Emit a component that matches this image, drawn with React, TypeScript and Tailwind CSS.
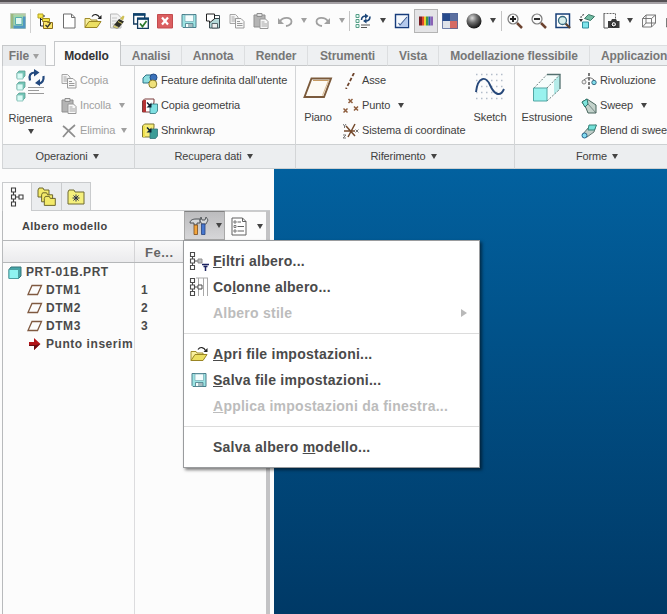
import type { ReactNode } from 'react'
import clsx from 'clsx'

type IconProps = { children: ReactNode; w?: number; h?: number }

function Svg({ children, w = 16, h = 16 }: IconProps) {
  return (
    <svg width={w} height={h} viewBox={`0 0 ${w} ${h}`} fill="none" className="block shrink-0">
      {children}
    </svg>
  )
}

function Arrow({ light }: { light?: boolean }) {
  return (
    <svg width="6" height="5" viewBox="0 0 6 5" className="block shrink-0">
      <path d="M0 0h6L3 5z" fill={light ? '#a0a0a0' : '#444'} />
    </svg>
  )
}

const WindowIcon = () => (
  <Svg>
    <path d="M.5.5h15v15H.5z" fill="#b5cba6" stroke="#c0d0bb" />
    <path d="M1 1h2.500v14H1z" fill="#9bb87e" />
    <path d="M3.500 3.500h12v12h-12z" fill="#4f97c2" />
    <path d="M3.500 2h9.500v10.500H3.500z" fill="#a3d6a8" />
    <path d="M5.500 4.500h6.500v7H5.500z" fill="#e2f8ee" stroke="#58adb0" />
  </Svg>
)

const TreeCheckIcon = () => (
  <Svg>
    <path d="M1 1h5v4H1z" fill="#f5e64a" stroke="#b5a21e" />
    <path d="M3.500 5v8H6M3.500 6.500H9M6 3h2" stroke="#1f2433" />
    <path d="M5.500 5.500h7v3h-7z" fill="#f5e64a" stroke="#a3901a" />
    <path d="M6.500 9.500v-1h4v1h5v6h-9z" fill="#fbe66c" stroke="#8a6d1d" />
    <path d="M8.500 12l2 2 3-4" stroke="#333" strokeWidth="1.300" />
  </Svg>
)

const PageIcon = () => (
  <Svg>
    <path d="M2.500 1h8l3.500 3.500v10.500H2.500z" fill="#fff" stroke="#6d6d6d" />
    <path d="M10.500 1v3.500H14" stroke="#6d6d6d" />
  </Svg>
)

const OpenIcon = () => (
  <Svg w={18}>
    <path d="M1 14.500V5.500h5l1 1.500h6v2" fill="#f8f0a0" stroke="#a08c2c" />
    <path d="M1 14.500l4-6h12l-4 6z" fill="#ecdf62" stroke="#9a8524" />
    <path d="M8 3.500c2-3 6-2.500 7.500 1" stroke="#222" strokeWidth="1.200" />
    <path d="M17.500 2v4h-4z" fill="#222" />
  </Svg>
)

const EraseIcon = () => (
  <Svg>
    <path d="M1.500 1h7L12 4.500V15H1.500z" fill="#f2f2f2" stroke="#b8b8b8" />
    <path d="M3 5h5M3 8h5M3 11h3" stroke="#c6c6c6" />
    <path d="M5 12l5-6 5 2.500-5 6z" fill="#2f2f25" />
    <path d="M5 12l5 2.500-2 1-4-1.500z" fill="#e5d86a" stroke="#777" strokeWidth=".6" />
    <path d="M11 5.500l3-3 1.500 1-1.500 4z" fill="#cdbf55" />
    <path d="M9 8.500l4 2" stroke="#d8ca68" />
  </Svg>
)

const WindowsCheckIcon = () => (
  <Svg>
    <path d="M.7 1h11v10H.7z" fill="#fff" stroke="#123a5c" strokeWidth="1.300" />
    <path d="M0 .3h12.500v2.500H0z" fill="#0d416c" />
    <path d="M4.600 5.500h10.700v9.800H4.600z" fill="#fff" stroke="#123a5c" strokeWidth="1.300" />
    <path d="M4 4.500h12v2.300H4z" fill="#0d416c" />
    <path d="M7 10.500l2.500 3 4-5.500" stroke="#2c7a2c" strokeWidth="1.700" />
  </Svg>
)

const CloseIcon = () => (
  <Svg>
    <path d="M.5 1.500h15v13.500H.5z" fill="#db5e60" stroke="#c34b4e" />
    <path d="M5 4.500l6 7M11 4.500l-6 7" stroke="#fff" strokeWidth="2.200" />
  </Svg>
)

const DiskIcon = () => (
  <Svg>
    <path d="M1 1.500h14v13H2L1 13.500z" fill="#9ce4e3" stroke="#4c7f8c" />
    <path d="M4 2h8.500v6.500H4z" fill="#f4fdfd" stroke="#78a9b3" strokeWidth=".7" />
    <path d="M4.500 10.500H12v4H4.500z" fill="#a5bcc0" stroke="#4c7f8c" strokeWidth=".8" />
    <path d="M5 11h2v3H5z" fill="#f4fdfd" />
  </Svg>
)

const SaveCopyIcon = () => (
  <Svg>
    <path d="M4.500 5.500h10v9.500h-10z" fill="#b4d8d8" stroke="#3a4a50" />
    <path d="M7 10.500h5.500V15H7z" fill="#eee" stroke="#3a4a50" strokeWidth=".8" />
    <path d="M1.500 1h8v5l-3 2-2 2V8h-3z" fill="#fff" stroke="#222" />
    <path d="M10 2.500h4.500V15" stroke="#3a4a50" />
  </Svg>
)

const CopyIcon = () => (
  <Svg>
    <path d="M1 1.500h5.500l2.500 2.500v6.500H1z" fill="#f4f4f4" stroke="#a6a6a6" />
    <path d="M2.500 4h3M2.500 6h5M2.500 8h5" stroke="#a6a6a6" />
    <path d="M6.500 5.500H12l3 3V15H6.500z" fill="#f8f8f8" stroke="#9b9b9b" />
    <path d="M8 8.500h3M8 10.500h5.500M8 12.500h5.500" stroke="#9b9b9b" />
  </Svg>
)

const PasteIcon = () => (
  <Svg>
    <path d="M1 2h11v12H1z" fill="#b4b4b4" stroke="#8f8f8f" />
    <path d="M4 .5h5v3H4z" fill="#e2e2e2" stroke="#8f8f8f" />
    <path d="M7 6h5.500L15 8.500v7H7z" fill="#f8f8f8" stroke="#989898" />
    <path d="M8.500 9h3M8.500 11H14M8.500 13H14" stroke="#a5a5a5" />
  </Svg>
)

const UndoIcon = ({ flip }: { flip?: boolean }) => (
  <svg width="16" height="16" viewBox="0 0 16 16" fill="none" className={clsx('block', flip && '-scale-x-100')}>
    <path d="M3 8.500C5.500 4 14.500 3.500 14.500 8.500c0 2.500-2 4-5.500 4.500" stroke="#a0a0a0" strokeWidth="1.800" />
    <path d="M1 5v6h6z" fill="#a0a0a0" />
  </svg>
)

const RegenListIcon = () => (
  <Svg>
    <path d="M1 1.500h3v3H1zM1 6.500h3v3H1zM1 11.500h3v3H1z" fill="#e6fbf4" stroke="#579f88" />
    <path d="M6 12h9M6 14.500h6" stroke="#555" />
    <path d="M6.500 7c0-3 2-4 4.500-4M15 3.500c0 3-2 4.500-4.500 4.500" stroke="#1c4679" strokeWidth="1.600" />
    <path d="M10 .5L13.500 3 10 6zM11.500 5.500v5L8 8z" fill="#1c4679" />
  </Svg>
)

const RepaintIcon = () => (
  <Svg>
    <path d="M1.500 1.500h13v13h-13z" fill="#f4f8fd" stroke="#173c7c" strokeWidth="1.400" />
    <path d="M14 4v10H4z" fill="#b4c9ec" />
    <path d="M4.500 10l1.500 2 7-8" stroke="#3e5d93" strokeWidth="1.100" />
  </Svg>
)

const ColorsIcon = () => (
  <Svg>
    <path d="M1 3.500h3v9H1z" fill="#7a1d22" />
    <path d="M4 3.500h2v9H4z" fill="#e04a2b" />
    <path d="M6 3.500h2v9H6z" fill="#efcf31" />
    <path d="M8 3.500h2.500v9H8z" fill="#3d9a47" />
    <path d="M10.500 3.500h2v9h-2z" fill="#2a56b4" />
    <path d="M12.500 3.500h2.500v9h-2.500z" fill="#8a62b5" />
  </Svg>
)

const SquaresIcon = () => (
  <Svg>
    <path d="M0 0h8v8H0z" fill="#264a8c" />
    <path d="M8 0h8v8H8z" fill="#5b6f9f" />
    <path d="M0 8h8v8H0z" fill="#dfe3ea" />
    <path d="M8 8h8v8H8z" fill="#d66a64" />
    <path d="M.5.500h15v15H.5z" stroke="#52679a" strokeWidth=".8" />
  </Svg>
)

const SphereIcon = () => (
  <Svg>
    <defs>
      <radialGradient id="ball" cx=".38" cy=".3" r=".7">
        <stop offset="0" stopColor="#dadada" />
        <stop offset=".45" stopColor="#707070" />
        <stop offset="1" stopColor="#161616" />
      </radialGradient>
    </defs>
    <circle cx="8" cy="8" r="7.500" fill="url(#ball)" />
  </Svg>
)

const ZoomIcon = ({ plus }: { plus?: boolean }) => (
  <Svg>
    <path d="M10 10l5 5" stroke="#6c4330" strokeWidth="2.500" />
    <circle cx="6" cy="6" r="5" fill="#fafafa" stroke="#7b7b7b" strokeWidth="1.200" />
    <path d={plus ? 'M3 6h6M6 3v6' : 'M3 6h6'} stroke="#222" strokeWidth="1.900" />
  </Svg>
)

const RefitIcon = () => (
  <Svg>
    <path d="M1 1h13.500v13.500H1z" fill="#fff" stroke="#173f78" strokeWidth="1.500" />
    <path d="M10.500 10.500L15 15" stroke="#5b4432" strokeWidth="2.300" />
    <circle cx="7.500" cy="7.500" r="4" fill="#d9efec" stroke="#386a80" strokeWidth="1.300" />
  </Svg>
)

const ReorientIcon = () => (
  <Svg>
    <path d="M3.500 9h6v6h-6z" fill="#80e5ec" stroke="#2f8e9c" />
    <path d="M5.500 5.500l4-4 6 2-4 4z" fill="#72bda3" stroke="#3c7767" />
    <path d="M2 8V4.500c0-2 2-3 4-3" stroke="#333" strokeDasharray="2 1" />
    <path d="M0 6h4L2 9z" fill="#333" />
  </Svg>
)

const CameraIcon = () => (
  <Svg w={17}>
    <path d="M.5.500h12v5" stroke="#666" strokeDasharray="2 1" />
    <path d="M1 1v14h4" stroke="#555" />
    <path d="M5 8h3l1-2h4l1 2h2.500v7H5z" fill="#3d3d3d" />
    <circle cx="10.800" cy="11.300" r="2.700" fill="#eee" stroke="#111" />
    <circle cx="10.800" cy="11.300" r="1" fill="#444" />
  </Svg>
)

const CubeIcon = () => (
  <Svg>
    <path d="M1.500 5.500h9v8.500h-9zM5 2h9.500v8H5zM1.500 5.500L5 2M10.500 5.500l4-3.500M10.500 14l4-4M1.500 14L5 10" stroke="#6c6c6c" strokeWidth=".9" />
  </Svg>
)

function Cell({ children, on }: { children: ReactNode; on?: boolean }) {
  return (
    <div
      className={clsx(
        'flex h-6 w-6 shrink-0 items-center justify-center',
        on && 'border border-[#b4b4b4] bg-[#e4e4e6]'
      )}
    >
      {children}
    </div>
  )
}

function Drop({ light, wide }: { light?: boolean; wide?: boolean }) {
  return (
    <div className={clsx('flex shrink-0 justify-center', wide ? 'w-[15px]' : 'w-[14px]')}>
      <Arrow light={light} />
    </div>
  )
}

function QuickBar() {
  return (
    <div className="flex h-[33px] items-center pl-[6px]">
      <Cell><WindowIcon /></Cell>
      <div className="mr-[2px] h-6 w-px shrink-0 bg-[#d0d0d0]" />
      <Cell><TreeCheckIcon /></Cell>
      <Cell><PageIcon /></Cell>
      <Cell><OpenIcon /></Cell>
      <Cell><EraseIcon /></Cell>
      <Cell><WindowsCheckIcon /></Cell>
      <Cell><CloseIcon /></Cell>
      <Cell><DiskIcon /></Cell>
      <Cell><SaveCopyIcon /></Cell>
      <Cell><CopyIcon /></Cell>
      <Cell><PasteIcon /></Cell>
      <Cell><UndoIcon /></Cell>
      <Drop light />
      <Cell><UndoIcon flip /></Cell>
      <Drop light />
      <div className="mr-px h-5 w-px shrink-0 bg-[#c4c4c4]" />
      <Cell><RegenListIcon /></Cell>
      <Drop wide />
      <Cell><RepaintIcon /></Cell>
      <Cell on><ColorsIcon /></Cell>
      <Cell><SquaresIcon /></Cell>
      <Cell><SphereIcon /></Cell>
      <Drop />
      <div className="mx-px h-5 w-px shrink-0 bg-[#c4c4c4]" />
      <Cell><ZoomIcon plus /></Cell>
      <Cell><ZoomIcon /></Cell>
      <Cell><RefitIcon /></Cell>
      <Cell><ReorientIcon /></Cell>
      <Cell><CameraIcon /></Cell>
      <Drop />
      <Cell><CubeIcon /></Cell>
      <Cell><CubeIcon /></Cell>
    </div>
  )
}

const tabs = [
  { name: 'Analisi', width: 'w-[61px]' },
  { name: 'Annota', width: 'w-[63px]' },
  { name: 'Render', width: 'w-[63px]' },
  { name: 'Strumenti', width: 'w-[80px]' },
  { name: 'Vista', width: 'w-[51px]' },
  { name: 'Modellazione flessibile', width: 'w-[151px]' },
]

function TabBar() {
  return (
    <div className="flex h-[29px] items-end pl-[2px] text-[12px] font-bold tracking-[-0.1px] text-[#777]">
      <div className="flex h-[21px] w-[44px] shrink-0 items-center justify-center gap-1 border border-b-0 border-[#c6c8ca] bg-[#e9ebed]">
        File <Arrow light />
      </div>
      <div className="h-px w-[8px] shrink-0 bg-[#c6c8ca]" />
      <div className="flex h-[25px] w-[67px] shrink-0 items-center justify-center border border-b-0 border-[#c6c8ca] bg-[#fcfcfc] pt-[3px] pr-[2px] text-[#333]">
        Modello
      </div>
      {tabs.map((tab) => (
        <div
          key={tab.name}
          className={clsx(
            'flex h-[21px] shrink-0 items-center justify-center border-y border-r border-[#dcdee0] border-b-[#c6c8ca] bg-[#eef0f2] whitespace-nowrap',
            tab.width
          )}
        >
          {tab.name}
        </div>
      ))}
      <div className="flex h-[21px] flex-1 items-center border-y border-[#dcdee0] border-b-[#c6c8ca] bg-[#eef0f2] pl-[11px]">
        Applicazion
      </div>
    </div>
  )
}

const RegenerateIcon = () => (
  <Svg w={32} h={34}>
    {[4, 15, 26].map((y) => (
      <g key={y}>
        <path d={`M2 ${y}l2-2h6v5l-2 2H2z`} fill="#6fc8b8" stroke="#5d9a90" strokeWidth=".8" />
        <path d={`M2 ${y}h6v6H2z`} fill="#d9fbf5" stroke="#7fbdb2" strokeWidth=".8" />
      </g>
    ))}
    <path d="M13 18.500h16M13 21.500h11M13 24.500h16" stroke="#9a9a9a" />
    <path d="M15 11.500c-1.500-5 .5-8 4.500-8M28.500 7c.5 4-1.500 7-5 8" stroke="#23497e" strokeWidth="2.200" />
    <path d="M19 0l5.500 3.500L19 7.500zM25 10v7l-5-3z" fill="#23497e" />
  </Svg>
)

const DeleteIcon = () => (
  <Svg>
    <path d="M2 3c4 3 8 7 12 11M14 2C9 6 5 10 2 14" stroke="#8e8e8e" strokeWidth="1.700" />
  </Svg>
)

const UdfIcon = () => (
  <Svg>
    <path d="M1 5l3-3h6l-1 5-3 3H1z" fill="#8edee0" stroke="#2c7386" />
    <circle cx="11.500" cy="4.500" r="3.500" fill="#3a72bb" stroke="#234c85" />
    <path d="M8 8h6v6H8z" fill="#f3df67" />
    <circle cx="10.800" cy="11" r="4" fill="#efe17a" stroke="#8b7d2f" />
  </Svg>
)

const CopyGeomIcon = ({ wrap }: { wrap?: boolean }) => (
  <Svg>
    <path d="M.5 3l2-2H12v3l-2 10H.5z" fill={wrap ? '#f6ec76' : '#fff'} stroke={wrap ? '#7d7630' : '#7b3a3a'} />
    <path d={wrap ? 'M1 3h2v11H1z' : 'M1 2h3v12H1z'} fill={wrap ? '#efe04c' : '#b53335'} />
    <path d="M8 8l2-2h5.500v7l-2 2.500H8z" fill={wrap ? '#3b9c97' : '#7fe0e2'} stroke="#2f7278" strokeWidth=".8" />
    <path d="M5 4.500l3 3" stroke="#0c2233" strokeWidth="1.500" />
    <path d="M9.500 4.500v5H4.500z" fill="#0c2233" />
  </Svg>
)

const PlaneIcon = () => (
  <Svg w={32} h={24}>
    <path d="M9.500 2.500h19.500L22 21H2.500z" fill="#fdfaf4" stroke="#7b5a3b" strokeWidth="1.900" />
    <path d="M11 4.500h15.500" stroke="#c79b62" />
    <path d="M26.500 4.500L20.500 19.500" stroke="#c79b62" strokeWidth=".7" />
  </Svg>
)

const AxisIcon = () => (
  <Svg>
    <path d="M11 0L3 16" stroke="#6d432b" strokeWidth="1.800" strokeDasharray="3.500 2" />
  </Svg>
)

const PointIcon = () => (
  <Svg>
    <path d="M5.500 1l4 4M9.500 1l-4 4M.5 10.500l4 4M4.500 10.500l-4 4M11 8.500l4 4M15 8.500l-4 4" stroke="#8d5c3c" strokeWidth="1.500" />
  </Svg>
)

const CsysIcon = () => (
  <Svg>
    <path d="M1 8h11M3 3l9 10M12 1L5 14" stroke="#74492c" strokeWidth="1.500" />
    <path d="M0 1l1.500 2L3 1M1.500 3v2M0 12h3l-3 3h3M12.500 6.500l3 3M15.500 6.500l-3 3" stroke="#777" />
  </Svg>
)

const SketchIcon = () => (
  <Svg w={30} h={29}>
    {[1, 7, 13, 19, 25].map((y) => (
      <path key={y} d={`M1 ${y + 0.5}h28`} stroke="#b3bdca" strokeWidth="1.500" strokeDasharray="1.500 3.500" />
    ))}
    <path d="M1 19C3 3 11 3 15 12s10 13 14 4" stroke="#264779" strokeWidth="1.900" />
  </Svg>
)

const ExtrudeIcon = () => (
  <Svg w={30} h={30}>
    <path d="M2 15L15 1.500h13V16L15 28" fill="#f6fdfc" />
    <path d="M22 7.500L28 1.500V16l-6 6z" fill="#b5ece9" />
    <path d="M2 15L15 1.500M15 15L28 1.500M15 28l13-12" stroke="#6d8080" strokeDasharray="2 1.500" />
    <path d="M15 1.500h13V16" stroke="#54706f" strokeWidth="1.300" />
    <path d="M1.500 15h13.500v13H1.500z" fill="#98f2ee" stroke="#52a6a4" />
  </Svg>
)

const RevolveIcon = () => (
  <Svg>
    <path d="M8 0v16" stroke="#222" strokeWidth="1.200" strokeDasharray="3 1.500" />
    <circle cx="3" cy="9" r="2" fill="#eee" stroke="#888" />
    <circle cx="13" cy="9.500" r="2.200" fill="#7fdcea" stroke="#3b6d86" />
    <path d="M3 7c3-3 7-3 10 0" stroke="#666" />
  </Svg>
)

const SweepIcon = () => (
  <Svg>
    <path d="M1 4l5-3 9 6v8H7L5 10z" fill="#c3d2cb" stroke="#46645c" />
    <path d="M1 4l5-3 1 5-3 3z" fill="#7fe4dc" stroke="#2f7a70" />
    <path d="M7 6l8 9" stroke="#566" strokeWidth=".7" />
  </Svg>
)

const BlendIcon = () => (
  <Svg>
    <path d="M1 12L8 4l7-2-2 7-7 5z" fill="#bdccc8" stroke="#627773" />
    <path d="M8 2h7.500l-2 5H7z" fill="#74e0d8" stroke="#368379" />
    <circle cx="3.500" cy="12.500" r="2.500" fill="#84dcf0" stroke="#26658e" />
  </Svg>
)

type RowProps = { icon: ReactNode; label: string; off?: boolean; drop?: string }

function Row({ icon, label, off, drop }: RowProps) {
  return (
    <div className={clsx('flex h-[25px] items-center gap-[3px] whitespace-nowrap', off && 'text-[#a0a0a0]')}>
      {icon}
      <span>{label}</span>
      {drop && <div className={drop}><Arrow light={off} /></div>}
    </div>
  )
}

function Group({ title, width, children }: { title: string; width: string; children: ReactNode }) {
  return (
    <div className={clsx('flex h-[103px] shrink-0 flex-col border-r border-[#d3d5d7]', width)}>
      <div className="flex h-[78px] pt-[2px]">{children}</div>
      <div className="flex h-[25px] items-center justify-center gap-[5px] border-y border-[#cdd0d2] bg-[#eceef0] pr-[3px]">
        {title} <Arrow />
      </div>
    </div>
  )
}

function Ribbon() {
  return (
    <div className="flex pl-[2px] text-[11px] tracking-[-0.11px] text-[#3f3f3f]">
      <div className="flex border-l border-[#d3d5d7]">
        <Group title="Operazioni" width="w-[132px]">
          <div className="flex w-[55px] shrink-0 flex-col items-center pt-[1px]">
            <RegenerateIcon />
            <span className="mt-[7px]">Rigenera</span>
            <div className="mt-[2px]"><Arrow /></div>
          </div>
          <div className="pl-[3px]">
            <Row icon={<CopyIcon />} label="Copia" off />
            <Row icon={<PasteIcon />} label="Incolla" off drop="ml-[5px]" />
            <Row icon={<DeleteIcon />} label="Elimina" off drop="ml-[3px]" />
          </div>
        </Group>
        <Group title="Recupera dati" width="w-[161px]">
          <div className="pl-[7px]">
            <Row icon={<UdfIcon />} label="Feature definita dall'utente" />
            <Row icon={<CopyGeomIcon />} label="Copia geometria" />
            <Row icon={<CopyGeomIcon wrap />} label="Shrinkwrap" />
          </div>
        </Group>
        <Group title="Riferimento" width="w-[219px]">
          <div className="flex w-[44px] shrink-0 flex-col items-center pt-[8px]">
            <PlaneIcon />
            <span className="mt-[9px]">Piano</span>
          </div>
          <div className="w-[128px] shrink-0 pl-[3px]">
            <Row icon={<AxisIcon />} label="Asse" />
            <Row icon={<PointIcon />} label="Punto" drop="ml-[5px]" />
            <Row icon={<CsysIcon />} label="Sistema di coordinate" />
          </div>
          <div className="flex w-[44px] shrink-0 flex-col items-center pt-[5px]">
            <SketchIcon />
            <span className="mt-[7px]">Sketch</span>
          </div>
        </Group>
        <Group title="Forme" width="w-[168px]">
          <div className="flex w-[64px] shrink-0 flex-col items-center pt-[5px]">
            <ExtrudeIcon />
            <span className="mt-[6px]">Estrusione</span>
          </div>
          <div className="pl-[2px]">
            <Row icon={<RevolveIcon />} label="Rivoluzione" />
            <Row icon={<SweepIcon />} label="Sweep" drop="ml-[5px]" />
            <Row icon={<BlendIcon />} label="Blend di swee" />
          </div>
        </Group>
      </div>
    </div>
  )
}

const NodesIcon = () => (
  <Svg w={14} h={20}>
    <path d="M1.500 1h4v4h-4zM1.500 8h4v4h-4zM1.500 15h4v4h-4zM9 8h4v4H9zM3.500 5v3M3.500 12v3M5.500 10H9" stroke="#3c3c3c" strokeWidth="1.100" />
  </Svg>
)

const FoldersIcon = () => (
  <Svg w={20} h={20}>
    {[0, 4, 7].map((d) => (
      <path
        key={d}
        d={`M${1 + d * 0.9} ${10 + d * 1.2}v-7l1-2h4l1 2h5v7z`}
        fill="#f3ea6a"
        stroke="#5f5a22"
        strokeWidth=".9"
      />
    ))}
  </Svg>
)

const FavoritesIcon = () => (
  <Svg w={18} h={16}>
    <path d="M1 15V3l1-2h5l1 2h9v12z" fill="#f5f07c" stroke="#6f6a32" />
    <path d="M9 5.500v7M5.500 9h7M6.500 6.500l5 5M11.500 6.500l-5 5" stroke="#2b2f4a" strokeWidth="1" />
  </Svg>
)

const ToolsIcon = () => (
  <Svg w={20} h={20}>
    <path d="M1 7c0-3 3-4 6-4h4v4H8v2H5V7z" fill="#d5d8da" stroke="#4c5054" />
    <path d="M5 9h3.500v9.500H5z" fill="#f2a53c" stroke="#7c4c1c" strokeWidth=".8" />
    <path d="M12 1l1 3h3l1-3 2 3-2 4h-4l-2-3z" fill="#d5d8da" stroke="#4c5054" strokeWidth=".9" />
    <path d="M12.500 8h3.500v10.500h-3.500z" fill="#4878cf" stroke="#26437d" strokeWidth=".8" />
  </Svg>
)

const ListIcon = () => (
  <Svg w={16} h={19}>
    <path d="M1 1h10.500L15 4.500V18H1z" fill="#fff" stroke="#606060" />
    <path d="M11.500 1v3.500H15M6.500 5H10M6.500 9.500h6.500M6.500 14h6.500" stroke="#606060" />
    <path d="M3 4h2v2H3zM3 8.500h2v2H3zM3 13h2v2H3z" stroke="#606060" strokeWidth=".8" />
  </Svg>
)

const PartIcon = () => (
  <Svg w={14} h={13}>
    <path d="M1 3.500l2-2.500h10v9l-2.500 2.500H1z" fill="#46a5a8" stroke="#35777b" />
    <path d="M1 3.500h9.500v9H1z" fill="#8ff3f1" stroke="#4ca0a2" />
  </Svg>
)

const DatumIcon = () => (
  <Svg w={16} h={12}>
    <path d="M5 1.500h9.500l-4 9H1z" stroke="#7f5940" strokeWidth="1.300" />
  </Svg>
)

const InsertIcon = () => (
  <Svg w={12} h={12}>
    <path d="M0 4h5V0l6.500 6L5 12V8H0z" fill="#b31318" />
    <path d="M5 12V8H0V7h7l4-1z" fill="#6c0c10" />
  </Svg>
)

function TreeRow({ icon, name, id }: { icon: ReactNode; name: string; id?: string }) {
  return (
    <div className="flex h-[18px] items-center">
      <div className="flex h-full w-[131px] items-center gap-[4px] pl-[24px] whitespace-nowrap">
        <div className="flex w-[15px] shrink-0 justify-center">{icon}</div>
        {name}
      </div>
      <div className="pl-[7px]">{id}</div>
    </div>
  )
}

function TreePanel() {
  return (
    <div className="flex w-[274px] shrink-0 flex-col pt-[13px] pl-[2px]">
      <div className="flex h-[29px] items-end">
        <div className="flex h-[29px] w-[30px] items-center justify-center border border-b-0 border-[#c9cbcd] bg-[#fcfcfc]">
          <NodesIcon />
        </div>
        <div className="flex h-[29px] w-[30px] items-center justify-center border border-l-0 border-[#c9cbcd] bg-[#ebedef]">
          <FoldersIcon />
        </div>
        <div className="flex h-[29px] w-[29px] items-center justify-center border border-l-0 border-[#c9cbcd] bg-[#ebedef]">
          <FavoritesIcon />
        </div>
        <div className="h-px flex-1 bg-[#c9cbcd]" />
        <div className="w-[4px]" />
      </div>
      <div className="flex flex-1 border-l border-[#b8babc]">
        <div className="flex flex-1 flex-col">
          <div className="flex h-[29px] items-stretch">
            <div className="flex flex-1 items-center pt-[2px] pl-[19px] text-[11px] font-bold tracking-[0.4px] text-[#444]">
              Albero modello
            </div>
            <div className="flex w-[41px] items-center gap-[7px] border border-[#a8a8a8] border-t-[#808080] bg-linear-to-b from-[#bcbcbe] to-[#d6d6d8] pl-[4px]">
              <ToolsIcon />
              <Arrow />
            </div>
            <div className="flex w-[41px] items-center gap-[10px] border-t border-[#ccc] pl-[6px]">
              <ListIcon />
              <Arrow />
            </div>
          </div>
          <div className="flex h-[23px] border-y border-[#b5b7b9] bg-linear-to-b from-[#fafafa] to-[#ebebed] text-[13px] font-bold tracking-[0.5px] text-[#666]">
            <div className="w-[132px] border-r border-[#d4d4d6]" />
            <div className="pt-[3px] pl-[10px] leading-[18px]">Fe...</div>
          </div>
          <div className="flex-1 bg-[linear-gradient(to_right,transparent_131px,#dcdcde_131px,#dcdcde_132px,transparent_132px)] text-[12px] font-bold tracking-[0.55px] text-[#4a4a4a]">
            <div className="flex h-[18px] items-center gap-[4px] pl-[5px]">
              <PartIcon />
              PRT-01B.PRT
            </div>
            <TreeRow icon={<DatumIcon />} name="DTM1" id="1" />
            <TreeRow icon={<DatumIcon />} name="DTM2" id="2" />
            <TreeRow icon={<DatumIcon />} name="DTM3" id="3" />
            <TreeRow icon={<InsertIcon />} name="Punto inserim" />
          </div>
        </div>
        <div className="mr-[4px] w-[4px] bg-[#c3c3c5]" />
      </div>
    </div>
  )
}

const FilterIcon = ({ columns }: { columns?: boolean }) => (
  <Svg w={20} h={20}>
    {columns && <path d="M7 1h12M9.500 1v18M14.500 1v18M18.500 1v18" stroke="#a9a9a9" />}
    <path d="M1.500 1.500h4v4h-4zM1.500 8h4v4h-4zM1.500 14.500h4v4h-4zM3.500 5.500V8M3.500 12v2.500M5.500 10H9" stroke="#4b4b4b" strokeWidth="1.100" />
    <path d="M9 8h4v4H9z" fill={columns ? '#fff' : '#c0c0c0'} stroke={columns ? '#4b4b4b' : '#909090'} />
    {!columns && <path d="M13 13.500h7M14.500 15.500h4M16.500 16v4" stroke="#1c2360" strokeWidth="1.500" />}
  </Svg>
)

type ItemProps = { icon?: ReactNode; off?: boolean; sub?: boolean; children: ReactNode }

function Item({ icon, off, sub, children }: ItemProps) {
  return (
    <div className={clsx('flex h-[26px] items-center pr-[12px] whitespace-nowrap', off && 'text-[#bcbcbc]')}>
      <div className="flex w-[29px] shrink-0 justify-center">{icon}</div>
      <span className="flex-1">{children}</span>
      {sub && (
        <svg width="6" height="8" viewBox="0 0 6 8">
          <path d="M0 0l6 4-6 4z" fill="#b9b9b9" />
        </svg>
      )}
    </div>
  )
}

function Menu() {
  return (
    <div className="absolute top-[240px] left-[183px] h-[228px] w-[297px] border border-[#9a9c9e] bg-white pt-[7px] text-[14px] font-bold tracking-[0.25px] text-[#4a4a4a] shadow-[2px_2px_3px_rgba(0,0,0,0.5)]">
      <Item icon={<FilterIcon />}><u>F</u>iltri albero...</Item>
      <Item icon={<FilterIcon columns />}>Co<u>l</u>onne albero...</Item>
      <Item off sub>Albero stile</Item>
      <div className="mt-[7px] mb-[7px] h-px bg-[#dcdcdc]" />
      <Item icon={<OpenIcon />}><u>A</u>pri file impostazioni...</Item>
      <Item icon={<DiskIcon />}><u>S</u>alva file impostazioni...</Item>
      <Item off><u>A</u>pplica impostazioni da finestra...</Item>
      <div className="mt-[7px] mb-[7px] h-px bg-[#dcdcdc]" />
      <Item>Salva albero <u>m</u>odello...</Item>
    </div>
  )
}

export default function App() {
  return (
    <div className="relative flex h-[614px] w-[667px] flex-col overflow-hidden bg-[#fcfcfc] font-['Liberation_Sans',Arial,sans-serif]">
      <div className="h-[4px] shrink-0 border-t-2 border-[#555154] bg-[#a5a1a5]" />
      <QuickBar />
      <TabBar />
      <Ribbon />
      <div className="flex flex-1">
        <TreePanel />
        <div className="flex-1 bg-linear-to-b from-[#02619f] to-[#003966]" />
      </div>
      <Menu />
    </div>
  )
}
